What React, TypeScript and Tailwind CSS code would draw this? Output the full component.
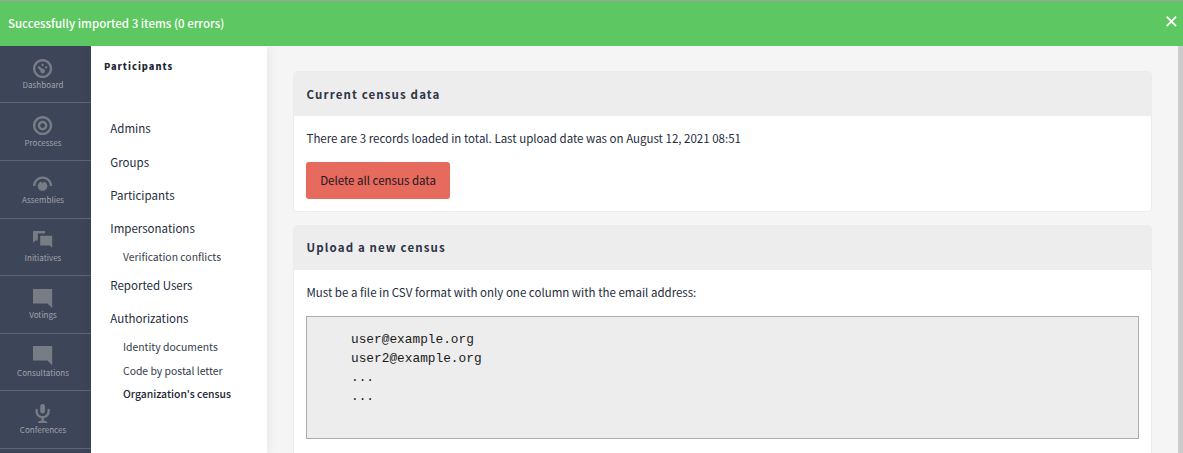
import type { ReactNode } from "react";

type IconName = "dashboard" | "target" | "dial" | "chat" | "comment" | "microphone";

const icons: Record<IconName, ReactNode> = {
  dashboard: (
    <path d="M4 0c-2.2 0-4 1.8-4 4s1.8 4 4 4 4-1.8 4-4-1.8-4-4-4zm0 1c1.66 0 3 1.34 3 3s-1.34 3-3 3-3-1.34-3-3 1.34-3 3-3zm0 1c-.28 0-.5.22-.5.5s.22.5.5.5.5-.22.5-.5-.22-.5-.5-.5zm-1.66 1a.5.5 0 0 0-.19.84l.91.91c-.02.08-.06.16-.06.25 0 .55.45 1 1 1s1-.45 1-1-.45-1-1-1c-.09 0-.17.04-.25.06l-.91-.91a.5.5 0 0 0-.44-.16.5.5 0 0 0-.06 0zm3.16 0c-.28 0-.5.22-.5.5s.22.5.5.5.5-.22.5-.5-.22-.5-.5-.5z" />
  ),
  target: (
    <path d="M4 0c-2.2 0-4 1.8-4 4s1.8 4 4 4 4-1.8 4-4-1.8-4-4-4zm0 1c1.66 0 3 1.34 3 3s-1.34 3-3 3-3-1.34-3-3 1.34-3 3-3zm0 1c-1.1 0-2 .9-2 2s.9 2 2 2 2-.9 2-2-.9-2-2-2zm0 1c.56 0 1 .44 1 1s-.44 1-1 1-1-.44-1-1 .44-1 1-1z" />
  ),
  dial: (
    <path
      transform="translate(0 1)"
      d="M4 0c-2.2 0-4 1.8-4 4h1c0-1.66 1.34-3 3-3s3 1.34 3 3h1c0-2.2-1.8-4-4-4zm-.59 2.09c-.81.25-1.41 1.01-1.41 1.91 0 1.11.9 2 2 2 1.11 0 2-.89 2-2 0-.9-.59-1.65-1.41-1.91l-.59.88-.59-.88z"
    />
  ),
  chat: <path d="M0 0v5l1-1h1v-3h3v-1h-5zm3 2v4h4l1 1v-5h-5z" />,
  comment: <path d="M0 0v6h6l2 2v-8h-8z" />,
  microphone: (
    <path
      transform="translate(1)"
      d="M2.91-.03a1 1 0 0 0-.13.03 1 1 0 0 0-.78 1v2a1 1 0 1 0 2 0v-2a1 1 0 0 0-1.09-1.03zm-2.56 2.03a.5.5 0 0 0-.34.5v.5c0 1.48 1.09 2.69 2.5 2.94v1.06h-.5c-.55 0-1 .45-1 1h4.01c0-.55-.45-1-1-1h-.5v-1.06c1.41-.24 2.5-1.46 2.5-2.94v-.5a.5.5 0 1 0-1 0v.5c0 1.11-.89 2-2 2-1.11 0-2-.89-2-2v-.5a.5.5 0 0 0-.59-.5.5.5 0 0 0-.06 0z"
    />
  ),
};

const modules: { label: string; icon: IconName }[] = [
  { label: "Dashboard", icon: "dashboard" },
  { label: "Processes", icon: "target" },
  { label: "Assemblies", icon: "dial" },
  { label: "Initiatives", icon: "chat" },
  { label: "Votings", icon: "comment" },
  { label: "Consultations", icon: "comment" },
  { label: "Conferences", icon: "microphone" },
];

const links: { label: string; sub?: boolean; active?: boolean }[] = [
  { label: "Admins" },
  { label: "Groups" },
  { label: "Participants" },
  { label: "Impersonations" },
  { label: "Verification conflicts", sub: true },
  { label: "Reported Users" },
  { label: "Authorizations" },
  { label: "Identity documents", sub: true },
  { label: "Code by postal letter", sub: true },
  { label: "Organization's census", sub: true, active: true },
];

function Flash() {
  return (
    <div className="z-20 flex h-[46px] shrink-0 items-start justify-between border-t border-[#9f9fa8] bg-[#5dc762] pl-2 pr-[6px] text-white">
      <p className="pt-[11.5px] text-[11.5px] font-medium leading-5">Successfully imported 3 items (0 errors)</p>
      <button aria-label="Dismiss" className="pt-[15px]">
        <svg viewBox="0 0 11 11" className="block size-[11px]" fill="none" stroke="currentColor" strokeWidth="1.8">
          <path d="M.7.7l9.4 9.4M10.1.7L.7 10.1" />
        </svg>
      </button>
    </div>
  );
}

function ModuleNav() {
  return (
    <nav className="w-[91px] shrink-0 overflow-hidden bg-[#3d4558]">
      <ul className="-mt-[0.2px]">
        {modules.map((m) => (
          <li
            key={m.label}
            className="flex h-[57.6px] flex-col items-center border-b border-[#5d6678] pr-[5px] pt-[12.7px]"
          >
            <svg viewBox="0 0 8 8" className="size-[19.2px] shrink-0 fill-[#777c85]">
              {icons[m.icon]}
            </svg>
            <span className="mt-[0.22px] text-[8.05px] leading-[14px] text-[#a1a4aa]">{m.label}</span>
          </li>
        ))}
      </ul>
    </nav>
  );
}

function SectionNav() {
  return (
    <nav className="z-10 w-[176px] shrink-0 bg-white shadow-[0_0_13px_rgba(0,0,0,0.08)]">
      <h2 className="h-[29px] pl-[13px] pt-3 text-[9.2px] font-black leading-4 tracking-[1.02px] text-[#202634]">
        Participants
      </h2>
      <ul className="pt-[37.35px]">
        {links.map((l) => (
          <li
            key={l.label}
            className={
              l.sub
                ? `flex h-[23.6px] items-center pl-8 text-[10.4px] ${l.active ? "font-medium text-[#202634]" : "text-[#343b4d]"}`
                : "flex h-[33.2px] items-center pl-[19.3px] text-[11.5px] text-[#252c3d]"
            }
          >
            {l.label}
          </li>
        ))}
      </ul>
    </nav>
  );
}

function Card({ title, className, children }: { title: string; className: string; children: ReactNode }) {
  return (
    <section className={`shrink-0 overflow-hidden rounded border border-[#ececec] bg-white ${className}`}>
      <h3 className="h-11 bg-[#ededed] px-[12.6px] pt-[11.4px] text-[11.5px] font-bold leading-[21px] tracking-[1.12px] text-[#2c3446]">
        {title}
      </h3>
      <div className="px-3 pt-[11px]">{children}</div>
    </section>
  );
}

export default function App() {
  return (
    <div className="flex h-[453px] w-[1183px] flex-col overflow-hidden font-['Noto_Sans_CJK_SC','Open_Sans',sans-serif]">
      <Flash />
      <div className="flex min-h-0 flex-1">
        <ModuleNav />
        <SectionNav />
        <main className="flex min-w-0 flex-1 flex-col gap-[12.6px] bg-[#f5f5f5] pl-[26px] pr-[26px] pt-[25.3px]">
          <Card title="Current census data" className="h-[141px]">
            <p className="pl-[0.5px] text-[11.5px] leading-[22px] text-[#252c3d]">
              There are 3 records loaded in total. Last upload date was on August 12, 2021 08:51
            </p>
            <button className="mt-[13px] flex h-[37px] w-36 items-center justify-center rounded-[3px] bg-[#e66a5e] text-[11.5px] text-[#1a181d]">
              Delete all census data
            </button>
          </Card>
          <Card title="Upload a new census" className="h-[260px]">
            <p className="pl-[0.5px] text-[11.5px] leading-[22px] text-[#252c3d]">
              Must be a file in CSV format with only one column with the email address:
            </p>
            <pre className="mt-[13px] h-[123px] border border-[#acacac] bg-[#ededed] px-[13.3px] py-[12.8px] font-['Liberation_Mono',monospace] text-[12.8px] leading-[19.2px] text-[#1a1a1a]">
              {"    user@example.org\n    user2@example.org\n    ...\n    ..."}
            </pre>
          </Card>
        </main>
        <div className="w-[5px] shrink-0 bg-[#cdcdcd]" />
      </div>
    </div>
  );
}
